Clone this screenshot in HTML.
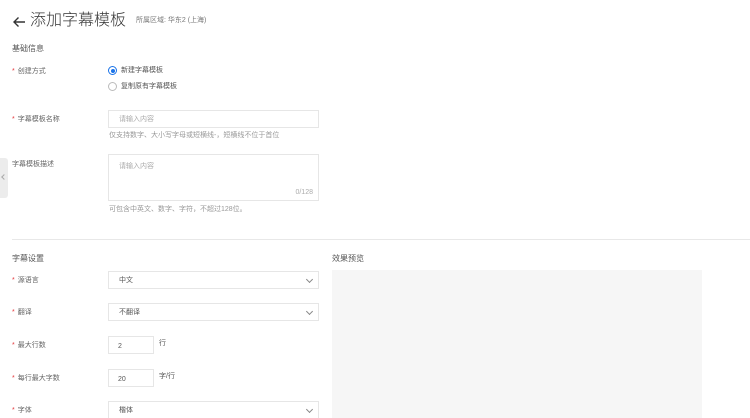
<!DOCTYPE html>
<html><head><meta charset="utf-8"><style>
*{margin:0;padding:0;box-sizing:border-box}
html,body{width:750px;height:418px;overflow:hidden}
body{background:#fff;position:relative;font-family:"Liberation Sans","Noto Sans CJK SC",sans-serif;color:#333}
.a{position:absolute;white-space:nowrap;line-height:1}
.s{font-size:7px;color:#666}
.s b{color:#e4393c;font-weight:normal;margin-right:3px}
.box{position:absolute;border:1px solid #e6e6e6;background:#fff}
.ph{font-size:7px;color:#aaa}
.h{font-size:7px;color:#999}
.chev{position:absolute;right:6px;top:5px;width:5px;height:5px;border-right:1px solid #888;border-bottom:1px solid #888;transform:rotate(45deg)}
</style></head><body>
<svg class="a" style="left:12px;top:16px" width="14" height="12" viewBox="0 0 14 12"><path d="M13 6H2M6.5 1.5L2 6l4.5 4.5" fill="none" stroke="#333" stroke-width="1.4"/></svg>
<div class="a" style="left:30px;top:13px;font-size:16px;color:#333;font-weight:300">添加字幕模板</div>
<div class="a" style="left:136px;top:17px;font-size:7px;color:#777">所属区域: 华东2 (上海)</div>
<div class="a" style="left:12px;top:45px;font-size:8px;color:#555">基础信息</div>

<div class="a s" style="left:12px;top:68px"><b>*</b>创建方式</div>
<div class="a" style="left:108px;top:66px;width:9px;height:9px;border:1px solid #1a73e8;border-radius:50%"><div style="position:absolute;left:1.5px;top:1.5px;width:4px;height:4px;border-radius:50%;background:#1a73e8"></div></div>
<div class="a s" style="left:121px;top:67px;color:#555">新建字幕模板</div>
<div class="a" style="left:108px;top:82px;width:9px;height:9px;border:1px solid #bbb;border-radius:50%"></div>
<div class="a s" style="left:121px;top:83px;color:#555">复制原有字幕模板</div>

<div class="a s" style="left:12px;top:116px"><b>*</b>字幕模板名称</div>
<div class="box" style="left:108px;top:110px;width:211px;height:18px"><span class="a ph" style="left:10px;top:5px">请输入内容</span></div>
<div class="a h" style="left:109px;top:132px">仅支持数字、大小写字母或短横线-，短横线不位于首位</div>

<div class="a s" style="left:12px;top:161px">字幕模板描述</div>
<div class="box" style="left:108px;top:154px;width:211px;height:47px"><span class="a ph" style="left:10px;top:8px">请输入内容</span><span class="a ph" style="right:5px;bottom:4px">0/128</span></div>
<div class="a h" style="left:109px;top:206px">可包含中英文、数字、字符，不超过128位。</div>

<div class="a" style="left:0;top:158px;width:8px;height:40px;background:#ececec;border-radius:0 3px 3px 0"></div>
<div class="a" style="left:2px;top:175px;width:4px;height:4px;border-left:1px solid #aaa;border-bottom:1px solid #aaa;transform:rotate(45deg)"></div>

<div class="a" style="left:12px;top:239px;width:738px;height:1px;background:#e8e8e8"></div>

<div class="a" style="left:12px;top:255px;font-size:8px;color:#555">字幕设置</div>
<div class="a" style="left:332px;top:255px;font-size:8px;color:#555">效果预览</div>
<div class="a" style="left:332px;top:270px;width:370px;height:148px;background:#f6f6f6"></div>

<div class="a s" style="left:12px;top:277px"><b>*</b>源语言</div>
<div class="box" style="left:108px;top:271px;width:211px;height:18px"><span class="a s" style="left:10px;top:5px;color:#555">中文</span><i class="chev"></i></div>

<div class="a s" style="left:12px;top:309px"><b>*</b>翻译</div>
<div class="box" style="left:108px;top:303px;width:211px;height:18px"><span class="a s" style="left:10px;top:5px;color:#555">不翻译</span><i class="chev"></i></div>

<div class="a s" style="left:12px;top:342px"><b>*</b>最大行数</div>
<div class="box" style="left:108px;top:336px;width:46px;height:18px"><span class="a s" style="left:9px;top:6px;color:#555">2</span></div>
<div class="a s" style="left:159px;top:340px;color:#555">行</div>

<div class="a s" style="left:12px;top:375px"><b>*</b>每行最大字数</div>
<div class="box" style="left:108px;top:369px;width:46px;height:18px"><span class="a s" style="left:9px;top:6px;color:#555">20</span></div>
<div class="a s" style="left:159px;top:373px;color:#555">字/行</div>

<div class="a s" style="left:12px;top:407px"><b>*</b>字体</div>
<div class="box" style="left:108px;top:401px;width:211px;height:20px"><span class="a s" style="left:10px;top:5px;color:#555">楷体</span><i class="chev"></i></div>
</body></html>
